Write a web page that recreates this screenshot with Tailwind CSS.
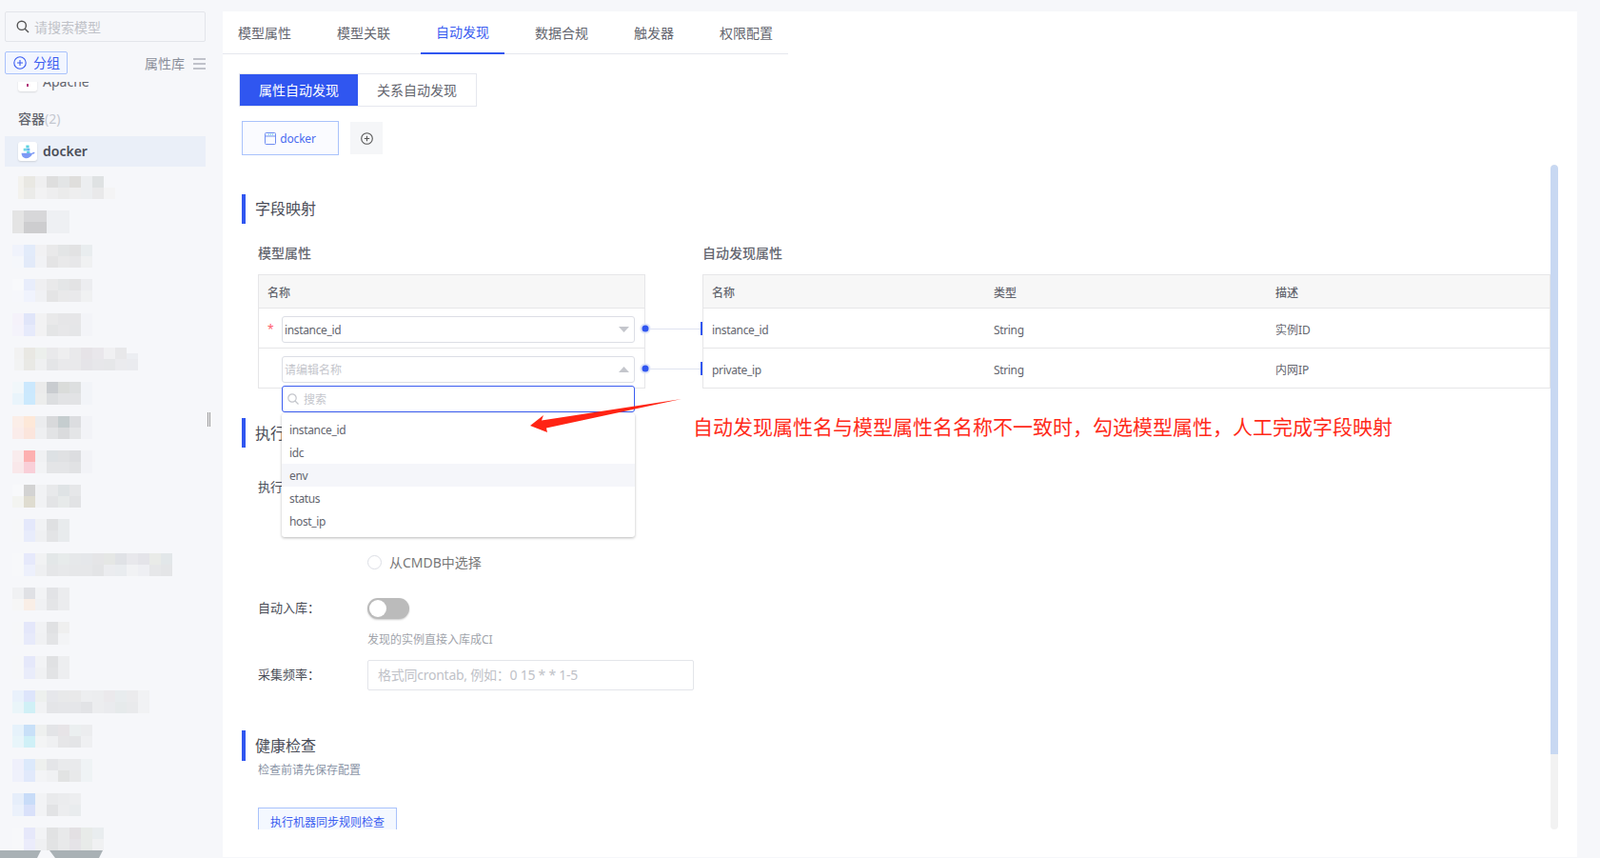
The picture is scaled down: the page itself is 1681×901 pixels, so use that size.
<!DOCTYPE html>
<html lang="zh">
<head>
<meta charset="utf-8">
<title>模型管理</title>
<script src="https://cdn.jsdelivr.net/npm/@tailwindcss/browser@4"></script>
</head>
<body class="m-0 w-[1681px] h-[901px] overflow-hidden bg-[#f6f7fa] font-['Noto_Sans','Noto_Sans_CJK_SC',sans-serif] text-[#63656e]">
<div class="flex w-[1681px] h-[901px]">

<!-- 侧栏 -->
<aside class="relative w-[234px] h-[901px] shrink-0 overflow-hidden">
  <div class="mt-3 ml-[5px] w-[211px] h-8 flex items-center gap-[5px] pl-[11px] border border-[#e3e5ea] rounded-[2px]">
    <svg class="w-[14px] h-[14px]" viewBox="0 0 14 14" fill="none" stroke="#555" stroke-width="1.4"><circle cx="5.8" cy="5.8" r="4.6"/><path d="M9.2 9.2 13 13"/></svg>
    <span class="pt-[2px] text-sm text-[#c0c2c8]">请搜索模型</span>
  </div>
  <div class="mt-[10px] ml-[5px] w-[211px] h-6 flex items-center justify-between">
    <div class="w-[66px] h-6 flex items-center gap-[7px] pl-2 border border-[#a9c2fb] rounded-[2px] bg-[#f2f6ff] text-[#3a5cf0] text-sm">
      <svg class="w-[14px] h-[14px]" viewBox="0 0 14 14" fill="none" stroke="#3a5cf0" stroke-width="1.1"><circle cx="7" cy="7" r="6.2"/><path d="M7 4v6M4 7h6"/></svg>
      <span>分组</span>
    </div>
    <div class="flex items-center gap-[9px] text-sm text-[#8a8e99] pt-[2px]">
      <span>属性库</span>
      <svg class="w-[13px] h-3" viewBox="0 0 13 12" stroke="#8a8e99" stroke-width="1.2"><path d="M0 1h13M0 6h13M0 11h13"/></svg>
    </div>
  </div>

  <div class="mt-[8px] h-[815px] overflow-hidden">
    <div class="-mt-[10px] ml-[19px] h-5 flex items-center gap-[6px]">
      <div class="w-5 h-5 rounded-[3px] bg-white shadow-[0_1px_2px_rgba(0,0,0,0.12)] flex items-center justify-end flex-col"><span class="block w-[2px] h-[3px] mb-[5px] bg-[#b0357a]"></span></div>
      <span class="text-sm text-[#63656e]">Apache</span>
    </div>
    <div class="mt-[19px] ml-[19px] h-5 flex items-center text-sm font-medium text-[#63656e]">容器<span class="font-normal text-[#c4c8d0]">(2)</span></div>
    <div class="mt-[8px] ml-[5px] w-[211px] h-8 bg-[#eaeff8] flex items-center gap-[6px] pl-[14px]">
      <div class="w-5 h-5 rounded-[3px] bg-white shadow-[0_1px_2px_rgba(0,0,0,0.12)] flex items-center justify-center">
        <svg class="w-[15px] h-[15px]" viewBox="0 0 14 14">
          <rect x="5" y="0.5" width="3" height="2.6" fill="#5fd3e0"/><rect x="2.5" y="3.5" width="3" height="2.6" fill="#6fd8e4"/><rect x="5.7" y="3.5" width="3" height="2.6" fill="#6cb4f0"/><rect x="5.7" y="6.5" width="3" height="2" fill="#5fd3e0"/>
          <path d="M0.5 8.2h10.5c.6-.8 1.8-1.2 2.6-.6-.4 1-1.4 1.5-2.4 1.4C9.8 12 7 13.5 4.5 13.2 2 13 .6 11 .5 8.2Z" fill="#7d9af5"/>
        </svg>
      </div>
      <span class="text-sm font-semibold text-[#4a4d57]">docker</span>
    </div>

    <div class="mt-[10px] ml-[19px] flex flex-col gap-3">
      <svg class="block ml-[-6px] w-[108px] h-6" viewBox="0 0 108 24" shape-rendering="crispEdges"><g><rect x="6" width="6" height="24" fill="#f3f2ee"/><rect x="12" width="12" height="12" fill="#e9e8e3"/><rect x="24" width="12" height="12" fill="#efeff0"/><rect x="36" width="12" height="12" fill="#dedede"/><rect x="48" width="12" height="12" fill="#e3e5e6"/><rect x="60" width="12" height="12" fill="#dfdedc"/><rect x="72" width="12" height="12" fill="#eceef0"/><rect x="84" width="12" height="12" fill="#dfe2e3"/><rect x="96" width="12" height="12" fill="#f6f7fa"/><rect x="12" y="12" width="12" height="12" fill="#ebebe9"/><rect x="24" y="12" width="12" height="12" fill="#f2f2f3"/><rect x="36" y="12" width="12" height="12" fill="#eeeeef"/><rect x="48" y="12" width="12" height="12" fill="#ebebeb"/><rect x="60" y="12" width="12" height="12" fill="#eeeeef"/><rect x="72" y="12" width="12" height="12" fill="#eceef0"/><rect x="84" y="12" width="12" height="12" fill="#e9e9ea"/><rect x="96" y="12" width="12" height="12" fill="#f4f4f5"/></g></svg>
      <svg class="block ml-[-6px] w-[60px] h-6" viewBox="0 0 60 24" shape-rendering="crispEdges"><rect width="12" height="24" fill="#e4e4e4"/><rect x="12" width="24" height="12" fill="#d7d7d9"/><rect x="36" width="24" height="24" fill="#eef0f3"/><rect x="12" y="12" width="24" height="12" fill="#cdcdcf"/></svg>
      <svg class="block ml-[-6px] w-[84px] h-6" viewBox="0 0 84 24" shape-rendering="crispEdges"><rect width="12" height="12" fill="#f0f3fc"/><rect x="12" width="12" height="12" fill="#e2ebfa"/><rect x="24" width="12" height="12" fill="#f1f1f3"/><rect x="36" width="12" height="12" fill="#e9e9ea"/><rect x="48" width="12" height="12" fill="#e3e5e6"/><rect x="60" width="12" height="12" fill="#e2e2e3"/><rect x="72" width="12" height="12" fill="#e9edef"/><rect y="12" width="12" height="12" fill="#f5f7fb"/><rect x="12" y="12" width="12" height="12" fill="#e2eaf9"/><rect x="24" y="12" width="12" height="12" fill="#f1f2f5"/><rect x="36" y="12" width="12" height="12" fill="#e4e4e5"/><rect x="48" y="12" width="12" height="12" fill="#e9e9ea"/><rect x="60" y="12" width="12" height="12" fill="#e7e7e9"/><rect x="72" y="12" width="12" height="12" fill="#f0f1f2"/></svg>
      <svg class="block ml-[-6px] w-[84px] h-6" viewBox="0 0 84 24" shape-rendering="crispEdges"><rect width="12" height="12" fill="#f8f9fb"/><rect x="12" width="12" height="12" fill="#e8edfb"/><rect x="24" width="12" height="12" fill="#efeff1"/><rect x="36" width="12" height="12" fill="#e9e9ea"/><rect x="48" width="12" height="12" fill="#e4e6e7"/><rect x="60" width="12" height="12" fill="#e3e3e4"/><rect x="72" width="12" height="12" fill="#ecedf0"/><rect y="12" width="12" height="12" fill="#f6f7fb"/><rect x="12" y="12" width="12" height="12" fill="#f0f3fd"/><rect x="24" y="12" width="12" height="12" fill="#f0f1f4"/><rect x="36" y="12" width="12" height="12" fill="#e4e4e5"/><rect x="48" y="12" width="12" height="12" fill="#e9e9ea"/><rect x="60" y="12" width="12" height="12" fill="#e9e9eb"/><rect x="72" y="12" width="12" height="12" fill="#f0f1f2"/></svg>
      <svg class="block ml-[-6px] w-[84px] h-6" viewBox="0 0 84 24" shape-rendering="crispEdges"><rect width="12" height="12" fill="#f5f2fa"/><rect x="12" width="12" height="12" fill="#e0e5f9"/><rect x="24" width="12" height="12" fill="#f2f2f3"/><rect x="36" width="12" height="12" fill="#e9e9ea"/><rect x="48" width="12" height="12" fill="#e6e6e8"/><rect x="60" width="12" height="12" fill="#e6e6e8"/><rect x="72" width="12" height="12" fill="#f3f4f8"/><rect y="12" width="12" height="12" fill="#f4f3fb"/><rect x="12" y="12" width="12" height="12" fill="#e6eafb"/><rect x="24" y="12" width="12" height="12" fill="#f2f2f3"/><rect x="36" y="12" width="12" height="12" fill="#e4e5e6"/><rect x="48" y="12" width="12" height="12" fill="#e7e7e9"/><rect x="60" y="12" width="12" height="12" fill="#e5e6e8"/><rect x="72" y="12" width="12" height="12" fill="#f3f4f8"/></svg>
      <svg class="block ml-[-6px] w-[132px] h-6" viewBox="0 0 132 24" shape-rendering="crispEdges"><rect x="2" width="10" height="12" fill="#f2f2f2"/><rect x="12" width="12" height="12" fill="#e9e8e3"/><rect x="24" width="12" height="12" fill="#ecefec"/><rect x="36" width="12" height="12" fill="#e9e9eb"/><rect x="48" width="12" height="12" fill="#eeeeef"/><rect x="60" width="12" height="12" fill="#e9e9eb"/><rect x="72" width="12" height="12" fill="#e6e3e7"/><rect x="84" width="12" height="12" fill="#e9e7eb"/><rect x="96" width="12" height="12" fill="#f0f0f2"/><rect x="108" width="12" height="12" fill="#e8e8ea"/><rect x="120" y="6" width="12" height="6" fill="#eceef2"/><rect x="2" y="12" width="10" height="12" fill="#f2f3f3"/><rect x="12" y="12" width="12" height="12" fill="#e9e9e5"/><rect x="24" y="12" width="12" height="12" fill="#eff0f1"/><rect x="36" y="12" width="12" height="12" fill="#e4e5e7"/><rect x="48" y="12" width="12" height="12" fill="#e9e9eb"/><rect x="60" y="12" width="12" height="12" fill="#e9e9eb"/><rect x="72" y="12" width="12" height="12" fill="#e5e4e8"/><rect x="84" y="12" width="12" height="12" fill="#e7e7ea"/><rect x="96" y="12" width="12" height="12" fill="#e6e7e9"/><rect x="108" y="12" width="12" height="12" fill="#ebebee"/><rect x="120" y="12" width="12" height="12" fill="#eaebef"/></svg>
      <svg class="block ml-[-6px] w-[84px] h-6" viewBox="0 0 84 24" shape-rendering="crispEdges"><rect width="12" height="12" fill="#f1f7fa"/><rect x="12" width="12" height="12" fill="#cbe8fd"/><rect x="24" width="12" height="12" fill="#ebebeb"/><rect x="36" width="12" height="12" fill="#c9ccd0"/><rect x="48" width="12" height="12" fill="#dadcda"/><rect x="60" width="12" height="12" fill="#dddfe0"/><rect x="72" width="12" height="24" fill="#f2f4f8"/><rect y="12" width="12" height="12" fill="#e9f4fb"/><rect x="12" y="12" width="12" height="12" fill="#cbe9fd"/><rect x="24" y="12" width="12" height="12" fill="#ecedec"/><rect x="36" y="12" width="12" height="12" fill="#dcdee0"/><rect x="48" y="12" width="12" height="12" fill="#e2e3e5"/><rect x="60" y="12" width="12" height="12" fill="#e2e3e5"/></svg>
      <svg class="block ml-[-6px] w-[84px] h-6" viewBox="0 0 84 24" shape-rendering="crispEdges"><rect width="12" height="12" fill="#fbeee8"/><rect x="12" width="12" height="12" fill="#fde8d8"/><rect x="24" width="12" height="12" fill="#ebecee"/><rect x="36" width="12" height="12" fill="#d8d9db"/><rect x="48" width="12" height="12" fill="#c5cdcf"/><rect x="60" width="12" height="12" fill="#dcdde0"/><rect x="72" width="12" height="24" fill="#f2f3f7"/><rect y="12" width="12" height="12" fill="#faecea"/><rect x="12" y="12" width="12" height="12" fill="#fbe5dc"/><rect x="24" y="12" width="12" height="12" fill="#eeeff1"/><rect x="36" y="12" width="12" height="12" fill="#e2e3e5"/><rect x="48" y="12" width="12" height="12" fill="#dadbdd"/><rect x="60" y="12" width="12" height="12" fill="#e4e5e7"/></svg>
      <svg class="block ml-[-6px] w-[84px] h-6" viewBox="0 0 84 24" shape-rendering="crispEdges"><rect width="12" height="12" fill="#f9eced"/><rect x="12" width="12" height="12" fill="#fdb0b0"/><rect x="24" width="12" height="12" fill="#f0f1f3"/><rect x="36" width="12" height="12" fill="#dde1e4"/><rect x="48" width="12" height="12" fill="#e0e1e3"/><rect x="60" width="12" height="12" fill="#dcdde0"/><rect x="72" width="12" height="24" fill="#f2f3f7"/><rect y="12" width="12" height="12" fill="#f9e8ea"/><rect x="12" y="12" width="12" height="12" fill="#f9cfd8"/><rect x="24" y="12" width="12" height="12" fill="#f2f3f5"/><rect x="36" y="12" width="12" height="12" fill="#e4e5e7"/><rect x="48" y="12" width="12" height="12" fill="#e4e5e7"/><rect x="60" y="12" width="12" height="12" fill="#e1e2e4"/></svg>
      <svg class="block ml-[-6px] w-[72px] h-6" viewBox="0 0 72 24" shape-rendering="crispEdges"><rect width="12" height="12" fill="#f8f9fb"/><rect x="12" width="12" height="12" fill="#d3d3d3"/><rect x="24" width="12" height="12" fill="#f1f2f4"/><rect x="36" width="12" height="12" fill="#e8e9eb"/><rect x="48" width="12" height="12" fill="#dfe3e5"/><rect x="60" width="12" height="12" fill="#e6e7e9"/><rect y="12" width="12" height="12" fill="#f3f4f1"/><rect x="12" y="12" width="12" height="12" fill="#dfdcd0"/><rect x="24" y="12" width="12" height="12" fill="#f1f2f4"/><rect x="36" y="12" width="12" height="12" fill="#e3e4e6"/><rect x="48" y="12" width="12" height="12" fill="#e7eaea"/><rect x="60" y="12" width="12" height="12" fill="#e2e3e5"/></svg>
      <svg class="block ml-[-6px] w-[60px] h-6" viewBox="0 0 60 24" shape-rendering="crispEdges"><rect width="12" height="24" fill="#f6f7f9"/><rect x="12" width="12" height="12" fill="#e4e8fb"/><rect x="24" width="12" height="12" fill="#f1f2f4"/><rect x="36" width="12" height="12" fill="#dfe0e2"/><rect x="48" width="12" height="24" fill="#e8ebed"/><rect x="12" y="12" width="12" height="12" fill="#e8ecfb"/><rect x="24" y="12" width="12" height="12" fill="#eff0f2"/><rect x="36" y="12" width="12" height="12" fill="#e3e4e6"/></svg>
      <svg class="block ml-[-6px] w-[168px] h-6" viewBox="0 0 168 24" shape-rendering="crispEdges"><rect width="12" height="24" fill="#f7f8fa"/><rect x="12" width="12" height="12" fill="#e6e9fb"/><rect x="24" width="12" height="12" fill="#f1f2f3"/><rect x="36" width="12" height="12" fill="#e3e7e8"/><rect x="48" width="12" height="12" fill="#e7ebeb"/><rect x="60" width="12" height="12" fill="#e6e8ea"/><rect x="72" width="12" height="12" fill="#e5e7ea"/><rect x="84" width="12" height="12" fill="#e5e5e7"/><rect x="96" width="12" height="12" fill="#e5e7e5"/><rect x="108" width="12" height="12" fill="#e0e2e6"/><rect x="120" width="12" height="12" fill="#e8e8ec"/><rect x="132" width="12" height="12" fill="#e4e4e9"/><rect x="144" width="12" height="12" fill="#e9ebe8"/><rect x="156" width="12" height="12" fill="#e2e7e9"/><rect x="12" y="12" width="12" height="12" fill="#edf0fc"/><rect x="24" y="12" width="12" height="12" fill="#eeeff1"/><rect x="36" y="12" width="12" height="12" fill="#e5e6e8"/><rect x="48" y="12" width="12" height="12" fill="#e7e8ea"/><rect x="60" y="12" width="12" height="12" fill="#e6e7e9"/><rect x="72" y="12" width="12" height="12" fill="#e6e7e9"/><rect x="84" y="12" width="12" height="12" fill="#e3e4e6"/><rect x="96" y="12" width="12" height="12" fill="#ebecef"/><rect x="108" y="12" width="12" height="12" fill="#e9ecef"/><rect x="120" y="12" width="12" height="12" fill="#f1f2f4"/><rect x="132" y="12" width="12" height="12" fill="#eeeff3"/><rect x="144" y="12" width="12" height="12" fill="#e6e7e9"/><rect x="156" y="12" width="12" height="12" fill="#e4e5e7"/></svg>
      <svg class="block ml-[-6px] w-[60px] h-6" viewBox="0 0 60 24" shape-rendering="crispEdges"><rect width="12" height="12" fill="#f0f1f3"/><rect x="12" width="12" height="12" fill="#e0e1e5"/><rect x="24" width="12" height="12" fill="#f2f3f5"/><rect x="36" width="12" height="12" fill="#e2e3e6"/><rect x="48" width="12" height="24" fill="#ebecee"/><rect y="12" width="12" height="12" fill="#f6f6f6"/><rect x="12" y="12" width="12" height="12" fill="#f9eee6"/><rect x="24" y="12" width="12" height="12" fill="#f0f1f3"/><rect x="36" y="12" width="12" height="12" fill="#e4e5e7"/></svg>
      <svg class="block ml-[-6px] w-[60px] h-6" viewBox="0 0 60 24" shape-rendering="crispEdges"><rect width="12" height="24" fill="#f6f7f9"/><rect x="12" width="12" height="12" fill="#e4e7fa"/><rect x="24" width="12" height="12" fill="#f1f2f4"/><rect x="36" width="12" height="12" fill="#e0e1e3"/><rect x="48" width="12" height="12" fill="#efefef"/><rect x="12" y="12" width="12" height="12" fill="#e7eafa"/><rect x="24" y="12" width="12" height="12" fill="#f0f1f3"/><rect x="36" y="12" width="12" height="12" fill="#e3e4e6"/><rect x="48" y="12" width="12" height="12" fill="#f3f4f6"/></svg>
      <svg class="block ml-[-6px] w-[60px] h-6" viewBox="0 0 60 24" shape-rendering="crispEdges"><rect width="12" height="24" fill="#f6f7f9"/><rect x="12" width="12" height="12" fill="#e5e8fa"/><rect x="24" width="12" height="12" fill="#f2f3f5"/><rect x="36" width="12" height="12" fill="#e0e1e3"/><rect x="48" width="12" height="24" fill="#edeef0"/><rect x="12" y="12" width="12" height="12" fill="#e9ecfa"/><rect x="24" y="12" width="12" height="12" fill="#f0f1f3"/><rect x="36" y="12" width="12" height="12" fill="#e2e3e5"/></svg>
      <svg class="block ml-[-6px] w-[144px] h-6" viewBox="0 0 144 24" shape-rendering="crispEdges"><rect width="12" height="12" fill="#e9f1fb"/><rect x="12" width="12" height="12" fill="#dde5fb"/><rect x="24" width="12" height="12" fill="#edf0ee"/><rect x="36" width="12" height="12" fill="#e6e7eb"/><rect x="48" width="12" height="12" fill="#e8e9ea"/><rect x="60" width="12" height="12" fill="#e9e9ea"/><rect x="72" width="12" height="12" fill="#edeef0"/><rect x="84" width="12" height="12" fill="#ecedef"/><rect x="96" width="12" height="12" fill="#ebe9ec"/><rect x="108" width="12" height="12" fill="#e8ecee"/><rect x="120" width="12" height="12" fill="#ebebed"/><rect x="132" width="12" height="24" fill="#f1f2f4"/><rect y="12" width="12" height="12" fill="#eaf5f9"/><rect x="12" y="12" width="12" height="12" fill="#d0f0f6"/><rect x="24" y="12" width="12" height="12" fill="#f1f2f4"/><rect x="36" y="12" width="12" height="12" fill="#e4e5e8"/><rect x="48" y="12" width="12" height="12" fill="#e5e6e9"/><rect x="60" y="12" width="12" height="12" fill="#e5e6e9"/><rect x="72" y="12" width="12" height="12" fill="#e2e3e6"/><rect x="84" y="12" width="12" height="12" fill="#ecedef"/><rect x="96" y="12" width="12" height="12" fill="#eaebee"/><rect x="108" y="12" width="12" height="12" fill="#e6eaeb"/><rect x="120" y="12" width="12" height="12" fill="#e9eaec"/></svg>
      <svg class="block ml-[-6px] w-[84px] h-6" viewBox="0 0 84 24" shape-rendering="crispEdges"><rect width="12" height="12" fill="#e6f2fb"/><rect x="12" width="12" height="12" fill="#c8e0f8"/><rect x="24" width="12" height="12" fill="#eef0ef"/><rect x="36" width="12" height="12" fill="#e3e4e7"/><rect x="48" width="12" height="12" fill="#e7e4e7"/><rect x="60" width="12" height="12" fill="#ebeff0"/><rect x="72" width="12" height="12" fill="#ecedef"/><rect y="12" width="12" height="12" fill="#e8f5fa"/><rect x="12" y="12" width="12" height="12" fill="#cff0f7"/><rect x="24" y="12" width="12" height="12" fill="#f3f4f5"/><rect x="36" y="12" width="12" height="12" fill="#eff0f2"/><rect x="48" y="12" width="12" height="12" fill="#e6e6e8"/><rect x="60" y="12" width="12" height="12" fill="#e4e5e7"/><rect x="72" y="12" width="12" height="12" fill="#eff0f2"/></svg>
      <svg class="block ml-[-6px] w-[84px] h-6" viewBox="0 0 84 24" shape-rendering="crispEdges"><rect width="12" height="12" fill="#eff0fb"/><rect x="12" width="12" height="12" fill="#dce9fb"/><rect x="24" width="12" height="12" fill="#eef0ee"/><rect x="36" width="12" height="12" fill="#e4e5e8"/><rect x="48" width="12" height="12" fill="#e9eaec"/><rect x="60" width="12" height="12" fill="#e9eaec"/><rect x="72" width="12" height="24" fill="#eff3f5"/><rect y="12" width="12" height="12" fill="#eff1fb"/><rect x="12" y="12" width="12" height="12" fill="#e1e9fb"/><rect x="24" y="12" width="12" height="12" fill="#f3f4f6"/><rect x="36" y="12" width="12" height="12" fill="#f0f1f3"/><rect x="48" y="12" width="12" height="12" fill="#e2e3e3"/><rect x="60" y="12" width="12" height="12" fill="#e8e9ea"/></svg>
      <svg class="block ml-[-6px] w-[72px] h-6" viewBox="0 0 72 24" shape-rendering="crispEdges"><rect width="12" height="12" fill="#e6eefa"/><rect x="12" width="12" height="12" fill="#c8dcf8"/><rect x="24" width="12" height="12" fill="#f2f3f5"/><rect x="36" width="12" height="12" fill="#e9eaec"/><rect x="48" width="12" height="12" fill="#ebecee"/><rect x="60" width="12" height="12" fill="#edeef0"/><rect y="12" width="12" height="12" fill="#ebf1fb"/><rect x="12" y="12" width="12" height="12" fill="#d9e1fa"/><rect x="24" y="12" width="12" height="12" fill="#f2f3f5"/><rect x="36" y="12" width="12" height="12" fill="#e2e3e5"/><rect x="48" y="12" width="12" height="12" fill="#ecedef"/><rect x="60" y="12" width="12" height="12" fill="#e9ecee"/></svg>
      <svg class="block ml-[-6px] w-[96px] h-6" viewBox="0 0 96 24" shape-rendering="crispEdges"><rect width="12" height="24" fill="#f7f8fa"/><rect x="12" width="12" height="12" fill="#e6e8fa"/><rect x="24" width="12" height="12" fill="#f2f3f5"/><rect x="36" width="12" height="12" fill="#e1e2e3"/><rect x="48" width="12" height="12" fill="#e8e9ea"/><rect x="60" width="12" height="12" fill="#e3e0e3"/><rect x="72" width="12" height="12" fill="#e8ebe9"/><rect x="84" width="12" height="12" fill="#e9edef"/><rect x="12" y="12" width="12" height="12" fill="#ebecfb"/><rect x="24" y="12" width="12" height="12" fill="#eff0f2"/><rect x="36" y="12" width="12" height="12" fill="#e2e3e4"/><rect x="48" y="12" width="12" height="12" fill="#e8e9ea"/><rect x="60" y="12" width="12" height="12" fill="#e5e3e7"/><rect x="72" y="12" width="12" height="12" fill="#e8ebe9"/><rect x="84" y="12" width="12" height="12" fill="#f0f1f2"/></svg>
    </div>
  </div>

  <!-- 底部灰色折角 -->
  <svg class="absolute left-0 bottom-0 w-[110px] h-2" viewBox="0 0 110 8"><path d="M0 0h43l-4 8H0ZM52 0h56l-4 8H58Z" fill="#a9b1b5"/></svg>
  <!-- 拖拽手柄 -->
  <div class="absolute left-[218px] top-[433px] w-[3px] h-[15px] border-x border-[#999]"></div>
</aside>

<!-- 主面板 -->
<main class="relative mt-3 w-[1423px] h-[888px] bg-white">
  <nav class="w-[594px] h-[45px] flex gap-4 border-b border-[#e5e7ee] text-sm">
    <a class="h-[45px] px-4 flex items-center">模型属性</a>
    <a class="h-[45px] px-4 flex items-center">模型关联</a>
    <a class="h-[45px] px-4 flex items-center text-[#3a5cf0] border-b-2 border-[#3056f0]">自动发现</a>
    <a class="h-[45px] px-4 flex items-center">数据合规</a>
    <a class="h-[45px] px-4 flex items-center">触发器</a>
    <a class="h-[45px] px-4 flex items-center">权限配置</a>
  </nav>

  <div class="h-[814px] overflow-hidden pl-5">
    <div class="-ml-[3px] mt-5 flex h-[35px] w-[250px] border border-[#e5e7ee] text-sm">
      <div class="w-[124px] bg-[#3056f0] text-white flex items-center justify-center">属性自动发现</div>
      <div class="flex-1 flex items-center justify-center">关系自动发现</div>
    </div>

    <div class="mt-[15px] flex items-center gap-3 h-9">
      <div class="w-[102px] h-9 border border-[#a9c2fb] bg-[#fafbff] flex items-center justify-center gap-1 text-xs text-[#4a6cf0]">
        <svg class="w-3 h-[13px]" viewBox="0 0 12 13" fill="none" stroke="#6f8df2"><rect x=".5" y=".5" width="11" height="12" rx="1"/><path d="M.5 4h11"/><path d="M4 2.2h1M6 2.2h1M8 2.2h1" stroke="#3fc6d8"/></svg>
        <span class="pt-[2px] tracking-[-0.2px]">docker</span>
      </div>
      <div class="w-[34px] h-[34px] bg-[#f5f6f8] flex items-center justify-center">
        <svg class="w-[13px] h-[13px]" viewBox="0 0 13 13" fill="none" stroke="#555" stroke-width="1.1"><circle cx="6.5" cy="6.5" r="5.8"/><path d="M6.5 3.8v5.4M3.8 6.5h5.4"/></svg>
      </div>
    </div>

    <div class="mt-[41px] h-[31px] flex items-center border-l-4 border-[#3056f0] pl-[10px] pb-[2px] text-base text-[#4a4d57]">字段映射</div>

    <div class="mt-[21px] pl-[17px] flex items-start">
      <div class="w-[407px]">
        <div class="h-5 mb-3 flex items-center text-sm font-medium text-[#63656e]">模型属性</div>
        <div class="border border-[#e6e6e8] h-[120px] text-xs">
          <div class="h-[35px] pt-1 bg-[#f7f7f7] border-b border-[#e6e6e8] flex items-center pl-[9px] font-medium text-[#63656e]">名称</div>
          <div class="h-[42px] pt-[2px] border-b border-[#e6e6e8] flex items-center pl-[9px]">
            <span class="w-[15px] text-[#ff5a6a]">*</span>
            <div class="w-[371px] h-7 border border-[#dcdee5] rounded-[3px] flex items-center justify-between pl-[2px] pr-[5px]">
              <span class="pt-[2px] tracking-[-0.35px]">instance_id</span>
              <svg class="w-[11px] h-[6px]" viewBox="0 0 11 6"><path d="M0 0h11L5.5 6Z" fill="#c4c6cc"/></svg>
            </div>
          </div>
          <div class="h-[41px] pt-[2px] flex items-center pl-6">
            <div class="relative w-[371px] h-7 border border-[#dcdee5] rounded-[3px] flex items-center justify-between pl-[2px] pr-[5px]">
              <span class="pt-[2px] text-[#c4c6cc]">请编辑名称</span>
              <svg class="w-[11px] h-[6px]" viewBox="0 0 11 6"><path d="M0 6h11L5.5 0Z" fill="#c4c6cc"/></svg>
              <div class="absolute -left-px top-[30px] w-[371px] z-10">
                <div class="h-7 bg-white border border-[#3a5cf0] rounded-[3px] flex items-center gap-[5px] pl-[5px] text-[#c4c6cc]">
                  <svg class="w-3 h-3" viewBox="0 0 12 12" fill="none" stroke="#c4c6cc" stroke-width="1.2"><circle cx="5" cy="5" r="4.2"/><path d="M8 8l3.5 3.5"/></svg>
                  <span class="pt-[2px]">搜索</span>
                </div>
                <div class="mt-px pt-[5px] pb-[5px] bg-white rounded-[3px] shadow-[0_1px_3px_rgba(0,0,0,0.28)] text-[#63656e] tracking-[-0.35px]">
                  <div class="h-6 pt-[2px] flex items-center pl-2">instance_id</div>
                  <div class="h-6 pt-[2px] flex items-center pl-2">idc</div>
                  <div class="h-6 pt-[2px] flex items-center pl-2 bg-[#f5f6fa]">env</div>
                  <div class="h-6 pt-[2px] flex items-center pl-2">status</div>
                  <div class="h-6 pt-[2px] flex items-center pl-2">host_ip</div>
                </div>
              </div>
            </div>
          </div>
        </div>
      </div>

      <div class="relative w-[60px] pt-[68px] shrink-0">
        <div class="relative h-[42px] flex items-center"><div class="w-full h-px bg-[#dfe3f0]"></div><span class="absolute -left-[5px] top-[16px] w-[10px] h-[10px] rounded-full bg-[#3056f0] ring-[3px] ring-[#dfe5f7] scale-[0.7]"></span><span class="absolute right-0 top-[14px] w-[2px] h-[14px] bg-[#3056f0]"></span></div>
        <div class="relative h-[42px] flex items-center"><div class="w-full h-px bg-[#dfe3f0]"></div><span class="absolute -left-[5px] top-[16px] w-[10px] h-[10px] rounded-full bg-[#3056f0] ring-[3px] ring-[#dfe5f7] scale-[0.7]"></span><span class="absolute right-0 top-[14px] w-[2px] h-[14px] bg-[#3056f0]"></span></div>
      </div>

      <div class="w-[891px]">
        <div class="h-5 mb-3 flex items-center text-sm font-medium text-[#63656e]">自动发现属性</div>
        <div class="border border-[#e6e6e8] h-[120px] text-xs">
          <div class="h-[35px] pt-1 bg-[#f7f7f7] border-b border-[#e6e6e8] grid grid-cols-[296px_296px_1fr] items-center pl-[9px] font-medium">
            <span>名称</span><span>类型</span><span>描述</span>
          </div>
          <div class="h-[42px] pt-1 border-b border-[#e6e6e8] grid grid-cols-[296px_296px_1fr] items-center pl-[9px]">
            <span class="tracking-[-0.35px]">instance_id</span><span class="tracking-[-0.35px]">String</span><span>实例ID</span>
          </div>
          <div class="h-[41px] pt-1 grid grid-cols-[296px_296px_1fr] items-center pl-[9px]">
            <span class="tracking-[-0.35px]">private_ip</span><span class="tracking-[-0.35px]">String</span><span>内网IP</span>
          </div>
        </div>
      </div>
    </div>

    <div class="mt-[31px] h-[31px] flex items-center border-l-4 border-[#3056f0] pl-[10px] text-base text-[#4a4d57]">执行配置</div>

    <div class="mt-[30px] pt-1 pl-[17px] h-5 flex items-center text-[13px] text-[#4a4d57]">执行机器：</div>

    <div class="mt-[60px] pl-[132px] h-5 flex items-center gap-[8px] text-sm text-[#777]">
      <span class="block w-[15px] h-[15px] rounded-full border border-[#dcdee5]"></span>
      <span class="pt-[2px]">从CMDB中选择</span>
    </div>

    <div class="mt-[28px] pl-[17px] flex items-center h-[22px]">
      <span class="w-[115px] text-[13px] text-[#4a4d57]">自动入库：</span>
      <span class="relative block w-11 h-[22px] rounded-full bg-[#bbbbbb] shadow-[0_1px_2px_rgba(0,0,0,0.2)]"><span class="absolute left-[2px] top-[2px] block w-[18px] h-[18px] rounded-full bg-white"></span></span>
    </div>
    <div class="mt-[11px] pt-1 pl-[132px] h-[18px] flex items-center text-xs text-[#a0a3aa]">发现的实例直接入库成CI</div>

    <div class="mt-[14px] pl-[17px] flex items-center h-8">
      <span class="w-[115px] text-[13px] text-[#4a4d57]">采集频率：</span>
      <div class="w-[343px] h-8 border border-[#e3e5ea] rounded-[2px] flex items-center pl-[10px] text-sm tracking-[-0.25px] text-[#c0c2c8]">格式同crontab, 例如：0 15 * * 1-5</div>
    </div>

    <div class="mt-[42px] h-[32px] flex items-center border-l-4 border-[#3056f0] pl-[10px] text-base text-[#4a4d57]">健康检查</div>
    <div class="mt-[1px] pl-[17px] h-[18px] flex items-center text-xs text-[#8a94a6]">检查前请先保存配置</div>
    <div class="mt-[30px] ml-[17px] w-[146px] h-8 border border-[#a9c2fb] bg-[#f4f8ff] text-[#3a5cf0] text-xs flex items-center justify-center">执行机器同步规则检查</div>
  </div>

  <!-- 滚动条 -->
  <div class="absolute left-[1395px] top-[161px] w-2 h-[698px] rounded-full bg-[#f2f2f2] overflow-hidden">
    <div class="w-2 h-[619px] rounded-t-full bg-[#c8d8f2]"></div>
  </div>

  <!-- 标注 -->
  <svg class="absolute left-[315px] top-[400px] w-[175px] h-[50px] z-20" viewBox="0 0 175 50"><path d="M8 35 22 24 20 29.5 167 7 25 37.5 26 42Z" fill="#ff2414"/></svg>
  <p class="absolute left-[494px] top-[420px] z-20 text-[21px] leading-8 whitespace-nowrap text-[#ff2a1a]">自动发现属性名与模型属性名名称不一致时，勾选模型属性，人工完成字段映射</p>
</main>
</div>
</body>
</html>
